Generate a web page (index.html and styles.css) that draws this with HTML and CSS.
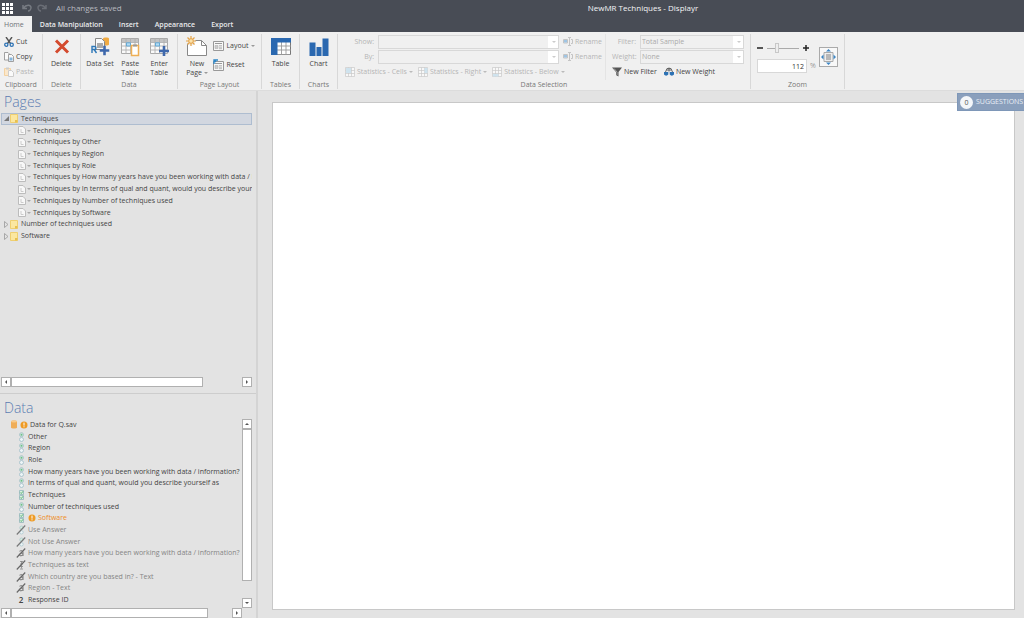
FILE: index.html
```html
<!DOCTYPE html>
<html lang="en">
<head>
<meta charset="utf-8">
<title>NewMR Techniques - Displayr</title>
<link rel="stylesheet" href="styles.css">
</head>
<body>
<svg class="sprite" aria-hidden="true">
  <symbol id="folder" viewBox="0 0 8 9"><path d="M.5.5h7v8h-7z" fill="#fbe7a0" stroke="#efcf70"/><path d="M5 6h2.500v2.500H5z" fill="#e8c050"/></symbol>
  <symbol id="page" viewBox="0 0 8 9"><path d="M.5.5H5L7.500 3v5.500h-7z" fill="#f8f8f8" stroke="#bcbcbc"/><path d="M3 3v3.500h2.500" fill="none" stroke="#ccc"/></symbol>
  <symbol id="open" viewBox="0 0 5 5"><path d="M5 0v5H0z" fill="#777"/></symbol>
  <symbol id="closed" viewBox="0 0 5 7"><path d="M.5.5v6L4 3.500z" fill="none" stroke="#999" stroke-width=".8"/></symbol>
  <symbol id="radio" viewBox="0 0 10 10"><circle cx="5.500" cy="2.700" r="2" fill="#d6eee0" stroke="#a0bcc4" stroke-width=".8"/><circle cx="5.500" cy="2.700" r="1" fill="#6ebc88"/><circle cx="5.500" cy="7.500" r="2" fill="#edf4f6" stroke="#a0bcc8" stroke-width=".8"/></symbol>
  <symbol id="check" viewBox="0 0 10 10"><path d="M3.500.5h4v4h-4zM3.500 5.500h4v4h-4z" fill="#d9f0df" stroke="#93b5bb" stroke-width=".8"/><path d="M4.300 2.500l1 1L7 1.300M4.300 7.500l1 1L7 6.300" fill="none" stroke="#5cb178"/></symbol>
  <symbol id="radio-off" viewBox="0 0 10 10"><circle cx="5.500" cy="2.700" r="1.700" fill="#d6eee0" stroke="#abc8ca" stroke-width=".8"/><circle cx="5.500" cy="7.300" r="1.700" fill="#edf4f6" stroke="#a9c8cf" stroke-width=".8"/><path d="M.8 9.500L9.200.5" stroke="#777" stroke-width="1.100"/></symbol>
  <symbol id="text-off" viewBox="0 0 10 10"><path d="M3.500 3.200c2-1 3.500-.4 3.500 1V8M7 5.200c-2.500-.2-4 .6-3.700 1.800.4 1.300 2.800 1 3.700-.3" fill="none" stroke="#777"/><path d="M.8 9.500L9.200.5" stroke="#666" stroke-width="1.100"/></symbol>
  <symbol id="multi-off" viewBox="0 0 10 10"><path d="M4 1.500h3M4 4h3M4 6.500h3M5.500 1v7.500M4 9h3" fill="none" stroke="#888" stroke-width=".8"/><path d="M.8 9.500L9.200.5" stroke="#666" stroke-width="1.100"/></symbol>
  <symbol id="warn" viewBox="0 0 8 8"><circle cx="4" cy="4" r="3.500" fill="#ee9b25"/><path d="M4 1.600v3M4 5.300v1" stroke="#fff" stroke-width="1"/></symbol>
  <symbol id="db" viewBox="0 0 8 9"><path d="M1 1.500C1 .2 7 .2 7 1.500v6C7 8.800 1 8.800 1 7.500z" fill="#efad58"/><ellipse cx="4" cy="1.600" rx="3" ry="1" fill="#f8cb8b"/></symbol>
  <symbol id="grid" viewBox="0 0 18 16"><path d="M.5.5h17v15H.5z" fill="#fafafa" stroke="#aaa"/><path d="M1 1h16v3H1z" fill="#c4c4c4"/><path d="M0 4.500h18M0 8h18M0 12h18M5 0v16M9.500 0v16M14 0v16" stroke="#b0b0b0" stroke-width=".9"/><path d="M5.500 4.800h4V8h-4z" fill="#b3dcf3" stroke="#65a9d5"/></symbol>
  <symbol id="plus" viewBox="0 0 10 10"><path d="M5 0v10M0 5h10" stroke="#3e68ac" stroke-width="2.600"/></symbol>
  <symbol id="sheet" viewBox="0 0 11 10"><path d="M.5.5h10v9H.5z" fill="#f7f7f7" stroke="#999"/><path d="M2 2.500h7" stroke="#999"/><path d="M2 4.500h3v3H2z" fill="#ccc" stroke="#aaa" stroke-width=".5"/><path d="M6 4.700h3M6 6.200h3M6 7.700h3" stroke="#aaa" stroke-width=".8"/></symbol>
  <symbol id="rename" viewBox="0 0 10 9"><path d="M.5 2.500h4v3.500h-4zM5 .5h3M5 8.500h3M6.500.5v8M8 2.500h1.500v4H8" fill="none" stroke="#c4c4c4"/><path d="M1 3h3v2.500H1z" fill="#9fc5e4"/></symbol>
  <symbol id="stat-cells" viewBox="0 0 10 10"><path d="M.5.5h9v9h-9zM3.500.5v9M6.500.5v9M.5 3.500h9M.5 6.500h9" fill="#f8f8f8" stroke="#c8c8c8" stroke-width=".7"/><path d="M1 1h5v5H1z" fill="#cfe3ee"/></symbol>
  <symbol id="stat-right" viewBox="0 0 10 10"><path d="M.5.5h9v9h-9zM3.500.5v9M6.500.5v9M.5 3.500h9M.5 6.500h9" fill="#f8f8f8" stroke="#c8c8c8" stroke-width=".7"/><path d="M6.500 1h3v5h-3z" fill="#cfe3ee"/></symbol>
  <symbol id="stat-below" viewBox="0 0 10 10"><path d="M.5.5h9v9h-9zM3.500.5v9M6.500.5v9M.5 3.500h9M.5 6.500h9" fill="#f8f8f8" stroke="#c8c8c8" stroke-width=".7"/><path d="M1 7h5.500v2.500H1z" fill="#cfe3ee"/></symbol>
</svg>

<header class="top">
  <div class="titlebar">
    <button class="plain apps" aria-label="Apps"><svg width="11" height="11" viewBox="0 0 11 11" fill="#fff"><path d="M0 0h3v3H0zM4 0h3v3H4zM8 0h3v3H8zM0 4h3v3H0zM4 4h3v3H4zM8 4h3v3H8zM0 8h3v3H0zM4 8h3v3H4zM8 8h3v3H8z"/></svg></button>
    <button class="plain" aria-label="Undo"><svg width="10" height="8" viewBox="0 0 10 8" fill="none" stroke="#777b82" stroke-width="1.500"><path d="M1 1v3.500h4M1.500 4C4 .5 9 .5 9 3.500 9 5.500 7.500 7 6 7"/></svg></button>
    <button class="plain" aria-label="Redo"><svg width="10" height="8" viewBox="0 0 10 8" fill="none" stroke="#6a6e76" stroke-width="1.500"><path d="M9 1v3.500H5M8.500 4C6 .5 1 .5 1 3.500 1 5.500 2.500 7 4 7"/></svg></button>
    <span class="saved">All changes saved</span>
    <h1 class="doc-title">NewMR Techniques - Displayr</h1>
  </div>
  <nav class="tabs">
    <a href="#home" class="tab active">Home</a>
    <a href="#data" class="tab">Data Manipulation</a>
    <a href="#insert" class="tab">Insert</a>
    <a href="#appearance" class="tab">Appearance</a>
    <a href="#export" class="tab">Export</a>
  </nav>
</header>

<div class="ribbon">
  <section class="group g-clip">
    <div class="rows">
      <button class="plain cmd"><svg width="10" height="10" viewBox="0 0 10 10"><path d="M2 0l4.500 6.500M8 0L3.500 6.500" stroke="#555" stroke-width="1.400"/><circle cx="2.300" cy="7.700" r="1.600" fill="none" stroke="#2d72b4" stroke-width="1.300"/><circle cx="7.700" cy="7.700" r="1.600" fill="none" stroke="#2d72b4" stroke-width="1.300"/></svg>Cut</button>
      <button class="plain cmd"><svg width="10" height="10" viewBox="0 0 10 10" fill="#fafafa" stroke="#8a8a8a" stroke-width=".8"><path d="M.5.5H4L5.500 2v6h-5z"/><path d="M4.500 2.500h3l2 2v5h-5z"/><path d="M5.500 5.500h3v3h-3z" fill="#84b5dc" stroke="none"/></svg>Copy</button>
      <button class="plain cmd" disabled><svg width="10" height="10" viewBox="0 0 10 10"><path d="M.5 1.500h6v7h-6z" fill="#fae7cb" stroke="#f4d2a1"/><path d="M2 .5h3v2H2z" fill="#ccc"/><path d="M4.500 3.500h3l2 2v4h-5z" fill="#fafafa" stroke="#ccc"/></svg>Paste</button>
    </div>
    <h2 class="caption">Clipboard</h2>
  </section>
  <section class="group g-small">
    <div class="bigs"><button class="plain big"><svg width="20" height="22" viewBox="0 0 20 22"><path d="M4 4.500l12 12M16 4.500l-12 12" stroke="#d44a2e" stroke-width="3"/></svg><span>Delete</span></button></div>
    <h2 class="caption">Delete</h2>
  </section>
  <section class="group g-data">
    <div class="bigs">
      <button class="plain big"><svg width="20" height="22" viewBox="0 0 20 22"><path d="M13 2.500c0-1.300 6-1.300 6 0v6c0 1.300-6 1.300-6 0z" fill="#f0aa42"/><path d="M5.500 2.500h6l3 3v8h-9z" fill="#fafafa" stroke="#888"/><path d="M7 7h6v5H7z" fill="#aaa"/><path d="M2 17v-6.500h2.500c2 0 2 3 0 3H2m2.200 0L6.500 17" fill="none" stroke="#2e78b8" stroke-width="1.400"/><use href="#plus" x="9.500" y="9.500" width="10" height="10"/></svg><span>Data Set</span></button>
      <button class="plain big"><svg width="20" height="22" viewBox="0 0 20 22"><use href="#grid" x="1" y="2" width="18" height="16"/><path d="M11.500 9.500h7v10h-7z" fill="#fff" stroke="#eeaf55" stroke-width="1.500"/><path d="M13 8.500h4v2h-4z" fill="#999"/></svg><span>Paste<br>Table</span></button>
      <button class="plain big"><svg width="20" height="22" viewBox="0 0 20 22"><use href="#grid" x="1" y="2" width="18" height="16"/><use href="#plus" x="10" y="10" width="10" height="10"/></svg><span>Enter<br>Table</span></button>
    </div>
    <h2 class="caption">Data</h2>
  </section>
  <section class="group g-layout">
    <div class="bigs">
      <button class="plain big"><svg width="22" height="22" viewBox="0 0 22 22"><path d="M1.500 4.500h14l5 5v10h-19z" fill="#fff" stroke="#888"/><path d="M15.500 4.500v5h5" fill="none" stroke="#888"/><circle cx="5" cy="5" r="4.500" fill="#f0f0f0"/><path d="M5 0v10M0 5h10M1.500 1.500l7 7M8.500 1.500l-7 7" stroke="#e5a347" stroke-width="1.200"/><circle cx="5" cy="5" r="2.300" fill="#fae2ad" stroke="#e5a347"/></svg><span>New<br>Page <i class="caret"></i></span></button>
      <div class="pair">
        <button class="plain cmd"><svg width="11" height="10"><use href="#sheet"/></svg>Layout<i class="caret"></i></button>
        <button class="plain cmd"><svg width="11" height="12" viewBox="0 0 11 12"><use href="#sheet" x="0" y="2" width="11" height="10"/><path d="M1 5V1h4M3 3l-2-2" fill="none" stroke="#2e86c6" stroke-width="1.400"/></svg>Reset</button>
      </div>
    </div>
    <h2 class="caption">Page Layout</h2>
  </section>
  <section class="group g-small">
    <div class="bigs"><button class="plain big"><svg width="20" height="22" viewBox="0 0 20 22"><path d="M.5 2.500h19v16H.5z" fill="#fff" stroke="#777"/><path d="M6 10h14M6 14h14M10.500 6v13M15 6v13M6 18.500h14" stroke="#999" stroke-width=".9"/><path d="M0 2h20v4.500H6.500V19H0z" fill="#2a68b0"/></svg><span>Table</span></button></div>
    <h2 class="caption">Tables</h2>
  </section>
  <section class="group g-small">
    <div class="bigs"><button class="plain big"><svg width="20" height="22" viewBox="0 0 20 22" fill="#2a68b0"><path d="M.5 6.500h6V20h-6zM7.500 11h5v9h-5zM13.500 2.500h6V20h-6z"/></svg><span>Chart</span></button></div>
    <h2 class="caption">Charts</h2>
  </section>
  <section class="group g-select">
    <div class="selection">
      <div class="sel-left">
        <div class="field-row"><label for="show">Show:</label><span class="drop"><select id="show" disabled><option></option></select></span><button class="plain cmd" disabled><svg width="10" height="9"><use href="#rename"/></svg>Rename</button></div>
        <div class="field-row"><label for="by">By:</label><span class="drop"><select id="by" disabled><option></option></select></span><button class="plain cmd" disabled><svg width="10" height="9"><use href="#rename"/></svg>Rename</button></div>
        <div class="stats">
          <button class="plain cmd" disabled><svg width="10" height="10"><use href="#stat-cells"/></svg>Statistics - Cells<i class="caret"></i></button>
          <button class="plain cmd" disabled><svg width="10" height="10"><use href="#stat-right"/></svg>Statistics - Right<i class="caret"></i></button>
          <button class="plain cmd" disabled><svg width="10" height="10"><use href="#stat-below"/></svg>Statistics - Below<i class="caret"></i></button>
        </div>
      </div>
      <div class="sel-right">
        <div class="filter-row"><label for="filter">Filter:</label><span class="drop"><select id="filter" disabled><option>Total Sample</option></select></span></div>
        <div class="filter-row"><label for="weight">Weight:</label><span class="drop"><select id="weight" disabled><option>None</option></select></span></div>
        <div class="new-row">
          <button class="plain cmd"><svg width="10" height="10" viewBox="0 0 10 10"><path d="M0 .5h10L6.500 5v4.500L4 8V5z" fill="#555"/><path d="M2 1.500l3 3.500v3" fill="none" stroke="#bbb" stroke-width=".8"/></svg>New Filter</button>
          <button class="plain cmd"><svg width="10" height="10" viewBox="0 0 10 10"><path d="M5 .5v4M1.500 5L3 1.500h4L8.500 5M2.500 3h5" fill="none" stroke="#666"/><path d="M0 5h4.300v2.500c-1 1.500-3.300 1.500-4.300 0zM5.700 5H10v2.500c-1 1.500-3.300 1.500-4.300 0z" fill="#2d72b4"/></svg>New Weight</button>
        </div>
      </div>
    </div>
    <h2 class="caption">Data Selection</h2>
  </section>
  <section class="group g-zoom">
    <div class="zoom">
      <div class="zoom-left">
        <div class="slider-row">
          <button class="plain" aria-label="Zoom out"><svg width="6" height="6" viewBox="0 0 6 6"><path d="M0 3h6" stroke="#222" stroke-width="1.500"/></svg></button>
          <input class="slider" type="range" min="0" max="100" value="30" aria-label="Zoom level">
          <button class="plain" aria-label="Zoom in"><svg width="6" height="6" viewBox="0 0 6 6"><path d="M0 3h6M3 0v6" stroke="#222" stroke-width="1.500"/></svg></button>
        </div>
        <div class="percent-row"><input id="percent" class="percent" type="text" value="112"><label for="percent">%</label></div>
      </div>
      <button class="fit" aria-label="Fit to window"><svg width="17" height="18" viewBox="0 0 17 18"><path d="M4 4.500h9v9H4z" fill="#eee" stroke="#aaa"/><path d="M6 6h5v6H6z" fill="#b8b8b8"/><path d="M8.500 1L11 3.500H6zM8.500 17L11 14.500H6zM1 9l2.500-2.500v5zM16 9l-2.500-2.500v5z" fill="#3d86c4"/></svg></button>
    </div>
    <h2 class="caption">Zoom</h2>
  </section>
</div>

<div class="workspace">
  <aside class="sidebar">
    <section class="panel pages">
      <h2 class="panel-title">Pages</h2>
      <ul class="tree page-tree">
        <li class="node root selected"><svg width="5" height="5"><use href="#open"/></svg><svg width="8" height="9"><use href="#folder"/></svg><span>Techniques</span></li>
        <li class="node leaf"><svg width="8" height="9"><use href="#page"/></svg><i class="caret"></i><span>Techniques</span></li>
        <li class="node leaf"><svg width="8" height="9"><use href="#page"/></svg><i class="caret"></i><span>Techniques by Other</span></li>
        <li class="node leaf"><svg width="8" height="9"><use href="#page"/></svg><i class="caret"></i><span>Techniques by Region</span></li>
        <li class="node leaf"><svg width="8" height="9"><use href="#page"/></svg><i class="caret"></i><span>Techniques by Role</span></li>
        <li class="node leaf"><svg width="8" height="9"><use href="#page"/></svg><i class="caret"></i><span>Techniques by How many years have you been working with data / information?</span></li>
        <li class="node leaf"><svg width="8" height="9"><use href="#page"/></svg><i class="caret"></i><span>Techniques by In terms of qual and quant, would you describe yourself as</span></li>
        <li class="node leaf"><svg width="8" height="9"><use href="#page"/></svg><i class="caret"></i><span>Techniques by Number of techniques used</span></li>
        <li class="node leaf"><svg width="8" height="9"><use href="#page"/></svg><i class="caret"></i><span>Techniques by Software</span></li>
        <li class="node root"><svg width="5" height="7"><use href="#closed"/></svg><svg width="8" height="9"><use href="#folder"/></svg><span>Number of techniques used</span></li>
        <li class="node root"><svg width="5" height="7"><use href="#closed"/></svg><svg width="8" height="9"><use href="#folder"/></svg><span>Software</span></li>
      </ul>
      <div class="hscroll"><button class="arrow left" aria-label="Scroll left"></button><div class="track"><div class="thumb"></div></div><button class="arrow right" aria-label="Scroll right"></button></div>
    </section>
    <section class="panel data">
      <h2 class="panel-title">Data</h2>
      <div class="data-body">
        <div class="data-main">
          <ul class="tree data-tree">
            <li class="node set"><svg width="8" height="9"><use href="#db"/></svg><svg width="8" height="8"><use href="#warn"/></svg><span>Data for Q.sav</span></li>
            <li class="node var"><svg width="10" height="10"><use href="#radio"/></svg><span>Other</span></li>
            <li class="node var"><svg width="10" height="10"><use href="#radio"/></svg><span>Region</span></li>
            <li class="node var"><svg width="10" height="10"><use href="#radio"/></svg><span>Role</span></li>
            <li class="node var"><svg width="10" height="10"><use href="#radio"/></svg><span>How many years have you been working with data / information?</span></li>
            <li class="node var"><svg width="10" height="10"><use href="#radio"/></svg><span>In terms of qual and quant, would you describe yourself as</span></li>
            <li class="node var"><svg width="10" height="10"><use href="#check"/></svg><span>Techniques</span></li>
            <li class="node var"><svg width="10" height="10"><use href="#radio"/></svg><span>Number of techniques used</span></li>
            <li class="node var alert"><svg width="10" height="10"><use href="#check"/></svg><svg width="8" height="8"><use href="#warn"/></svg><span>Software</span></li>
            <li class="node var off"><svg width="10" height="10"><use href="#radio-off"/></svg><span>Use Answer</span></li>
            <li class="node var off"><svg width="10" height="10"><use href="#radio-off"/></svg><span>Not Use Answer</span></li>
            <li class="node var off"><svg width="10" height="10"><use href="#text-off"/></svg><span>How many years have you been working with data / information?</span></li>
            <li class="node var off"><svg width="10" height="10"><use href="#multi-off"/></svg><span>Techniques as text</span></li>
            <li class="node var off"><svg width="10" height="10"><use href="#text-off"/></svg><span>Which country are you based in? - Text</span></li>
            <li class="node var off"><svg width="10" height="10"><use href="#text-off"/></svg><span>Region - Text</span></li>
            <li class="node var"><b class="num">2</b><span>Response ID</span></li>
          </ul>
          <div class="hscroll"><button class="arrow left" aria-label="Scroll left"></button><div class="track"><div class="thumb"></div></div><button class="arrow right" aria-label="Scroll right"></button></div>
        </div>
        <div class="vscroll"><button class="arrow up" aria-label="Scroll up"></button><div class="track"><div class="thumb"></div></div><button class="arrow down" aria-label="Scroll down"></button></div>
      </div>
    </section>
  </aside>
  <main class="stage">
    <div class="canvas"></div>
    <button class="suggestions"><span class="count">0</span>SUGGESTIONS</button>
  </main>
</div>
</body>
</html>
```
FILE: styles.css
```css
* { box-sizing: border-box; }
body {
  margin: 0;
  min-height: 100vh;
  display: flex;
  flex-direction: column;
  font: 7px/10px "Open Sans", "Noto Sans", sans-serif;
  color: #444;
  background: #e3e3e3;
  overflow: hidden;
}
h1, h2, ul { margin: 0; padding: 0; font-weight: 400; list-style: none; }
button, input, select { font: inherit; color: inherit; margin: 0; }
svg { display: block; flex: none; }
.sprite { position: absolute; width: 0; height: 0; }
.plain { border: 0; background: none; padding: 0; }
.caret {
  display: inline-block;
  flex: none;
  border: 2px solid transparent;
  border-top-color: #999;
  border-bottom: 0;
}

/* Title bar and tabs */
.top { background: #484c55; color: #fff; }
.titlebar { display: flex; align-items: center; gap: 5px; height: 16px; padding-left: 2px; }
.apps { margin-right: 4px; }
.saved { margin-left: 4px; width: 201px; font-size: 8px; color: #b9bbc0; }
.doc-title { flex: 1; text-align: center; font-size: 8px; color: #f4f5f6; }
.tabs { display: flex; height: 16px; }
.tab { padding: 4px 8px 2px; font-weight: 600; color: #e9eaec; text-decoration: none; }
.tab.active { background: #f0f0f0; color: #6f7378; font-weight: 400; padding: 4px 8px 2px 4px; }

/* Ribbon */
.ribbon { display: flex; padding: 2px 0 1px; background: #f0f0f0; border-bottom: 1px solid #dcdcdc; }
.group { display: flex; flex-direction: column; flex: none; border-right: 1px solid #d8d8d8; }
.group > :first-child { flex: 1; min-height: 46px; }
.caption { font-size: 7px; line-height: 9px; text-align: center; color: #777; white-space: nowrap; }
.g-clip { width: 43px; }
.g-small { width: 38px; }
.g-data { width: 97px; }
.g-layout { width: 84px; }
.g-select { width: 413px; }
.g-zoom { width: 94px; }
.rows { display: flex; flex-direction: column; padding-left: 4px; }
.cmd { display: flex; align-items: center; gap: 2px; height: 15px; white-space: nowrap; }
.cmd:disabled { color: #b5b5b5; }
.cmd:disabled .caret { border-top-color: #bbb; }
.bigs { display: flex; justify-content: center; gap: 4px; padding-top: 2px; }
.big { display: flex; flex-direction: column; align-items: center; justify-content: flex-start; min-width: 25px; line-height: 9px; white-space: nowrap; }
.big span { padding-top: 1px; }
.big .caret { vertical-align: middle; }
.pair { display: flex; flex-direction: column; gap: 4px; padding-top: 2px; }

.selection { display: flex; }
.sel-left { width: 268px; padding-left: 7px; border-right: 1px solid #e4e4e4; }
.field-row { display: grid; grid-template-columns: 29px 181px auto; column-gap: 4px; align-items: center; height: 15px; justify-content: start; }
.field-row label, .filter-row label { text-align: right; color: #b5b5b5; }
.drop { position: relative; display: block; }
.drop select {
  display: block;
  width: 100%;
  height: 14px;
  padding: 0 1px;
  border: 1px solid #d8d8d8;
  border-radius: 0;
  background: linear-gradient(#fff, #fff) right / 10px 100% no-repeat #f0f0f0;
  appearance: none;
  color: #aaa;
  opacity: 1;
}
.drop::after { content: ""; position: absolute; right: 3px; top: 6px; border: 2px solid transparent; border-top-color: #ccc; border-bottom: 0; }
.stats { display: flex; gap: 5px; }
.sel-right { padding-left: 6px; }
.filter-row { display: grid; grid-template-columns: 24px 104px; column-gap: 4px; align-items: center; height: 15px; }
.new-row { display: flex; gap: 7px; }

.zoom { display: flex; gap: 3px; padding: 8px 0 0 6px; }
.slider-row { display: flex; align-items: center; gap: 4px; height: 12px; }
.slider { width: 32px; height: 12px; background: none; appearance: none; }
.slider::-webkit-slider-runnable-track { height: 1px; background: #aaa; }
.slider::-webkit-slider-thumb { appearance: none; width: 4px; height: 10px; margin-top: -5px; background: #eee; border: 1px solid #c8c8c8; }
.percent-row { display: flex; align-items: center; gap: 3px; padding-top: 5px; color: #999; }
.percent { width: 50px; height: 14px; padding: 0 2px; border: 1px solid #d8d8d8; background: #fff; color: #333; text-align: right; }
.fit { align-self: flex-start; margin-top: 5px; padding: 0; border: 1px solid #aaa; background: #f8f8f8; }

/* Workspace */
.workspace { flex: 1; display: flex; min-height: 0; }
.sidebar { display: flex; flex-direction: column; flex: none; width: 258px; border-right: 2px solid #d4d4d4; }
.panel { display: flex; flex-direction: column; }
.panel-title { padding: 3px 4px 0; font-size: 14px; line-height: 22px; font-weight: 300; color: #5c7db2; }
.pages { flex: 1; padding: 0 4px 6px 1px; border-bottom: 1px solid #cdcdcd; }
.pages .panel-title { padding: 0 3px; }
.tree { display: grid; grid-auto-rows: 1fr; overflow: hidden; }
.node { display: flex; align-items: center; gap: 2px; min-width: 0; white-space: nowrap; }
.page-tree { min-height: 129px; margin-bottom: auto; }
.root { padding-left: 3px; gap: 1px; }
.root span { padding-left: 2px; }
.selected { background: #d2d7e0; outline: 1px solid #aebdd0; outline-offset: -1px; }
.leaf { padding-left: 17px; gap: 1px; }
.leaf span { padding-left: 1px; }
.leaf .caret { border-top-color: #aaa; }
.data-body { display: flex; padding: 0 4px 0 0; }
.data-main { width: 242px; padding-left: 1px; }
.data-tree { min-height: 189px; padding-bottom: 2px; }
.set { padding-left: 9px; }
.var { padding-left: 15px; }
.off { color: #858585; }
.alert { color: #ee8d25; }
.num { width: 10px; font-weight: 600; font-size: 8px; text-align: center; }

/* Scroll bars */
.hscroll, .vscroll { display: flex; }
.vscroll { flex-direction: column; width: 10px; padding-bottom: 10px; }
.track { flex: 1; }
.thumb { background: #fff; border: 1px solid #b0b0b0; }
.hscroll .thumb { height: 10px; }
.pages .thumb { width: 83%; }
.data .hscroll .thumb { width: 89%; }
.vscroll .thumb { width: 10px; height: 90%; }
.arrow { position: relative; flex: none; width: 10px; height: 10px; padding: 0; border: 1px solid #b0b0b0; background: #fff; }
.arrow::after { content: ""; position: absolute; inset: 0; margin: auto; width: 0; height: 0; border: 2px solid transparent; }
.left::after { border-right-color: #555; border-left: 0; }
.right::after { border-left-color: #555; border-right: 0; }
.up::after { border-bottom-color: #555; border-top: 0; }
.down::after { border-top-color: #555; border-bottom: 0; }

/* Document area */
.stage { position: relative; flex: 1; display: flex; padding: 11px 9px 8px 14px; }
.canvas { flex: 1; background: #fff; border: 1px solid #c8c8c8; }
.suggestions {
  position: absolute;
  top: 2px;
  right: 0;
  display: flex;
  align-items: center;
  gap: 3px;
  width: 67px;
  height: 18px;
  padding: 0 0 0 2px;
  border: 1px solid #7e97b8;
  border-right: 0;
  background: #8a9fbc;
  color: #e9eef5;
}
.count { flex: none; width: 13px; height: 13px; border-radius: 50%; background: #f4f6f9; color: #555; line-height: 13px; text-align: center; }
```
